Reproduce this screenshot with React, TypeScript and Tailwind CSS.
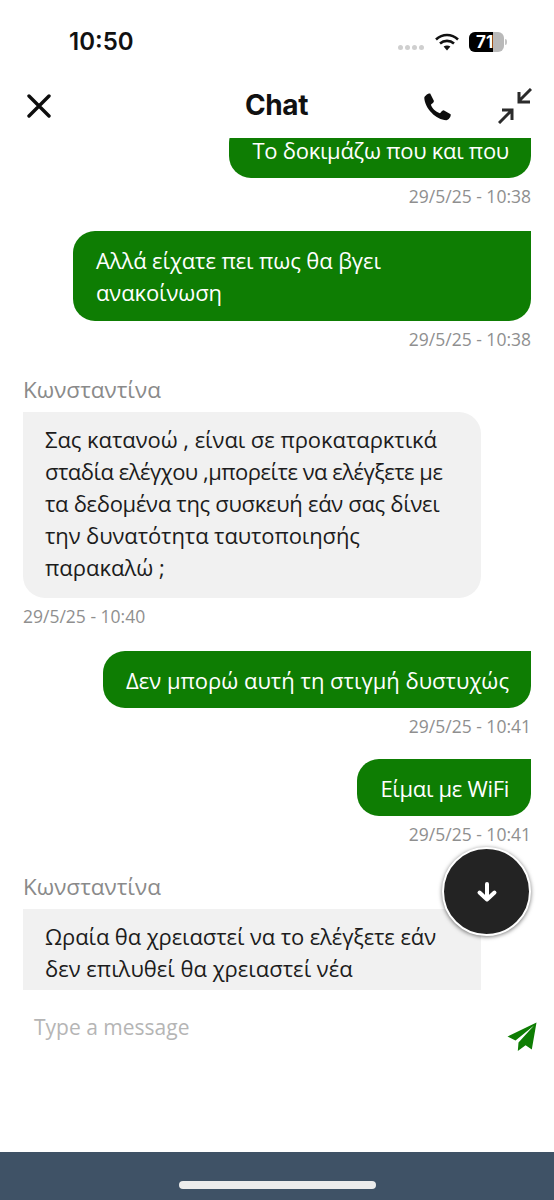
function Out({ text, time, cls = "" }: { text: React.ReactNode; time: string; cls?: string }) {
  return (
    <div className={`flex flex-col items-end ${cls}`}>
      <div className="bg-[#0e7d03] text-white rounded-bl-[22px] rounded-tl-[22px] rounded-br-[22px] pl-[23px] pr-[22px] pt-[13px] pb-[12px] text-[22px] leading-[32.2px]">{text}</div>
      <div className="mt-[6px] h-6 text-[17.5px] leading-6 text-[#8f8f8f]">{time}</div>
    </div>
  );
}
function In({ text, time, cls = "" }: { text: React.ReactNode; time?: string; cls?: string }) {
  return (
    <div className={`flex flex-col items-start ${cls}`}>
      <div className="h-7 text-[22.5px] leading-7 text-[#8a8a8a] mb-[8px]">Κωνσταντίνα</div>
      <div className="w-[458px] bg-[#f1f1f1] text-[#1c1c1c] rounded-tr-[22px] rounded-br-[22px] rounded-bl-[22px] pl-[22px] pr-[10px] pt-[11px] pb-[14px] text-[22px] leading-[32.2px] whitespace-nowrap">{text}</div>
      {time && <div className="mt-[6px] h-6 text-[17.5px] leading-6 text-[#8f8f8f]">{time}</div>}
    </div>
  );
}
export default function App() {
  return (
    <div className="relative w-[554px] h-[1200px] bg-white flex flex-col overflow-hidden font-['Open_Sans','Noto_Sans',sans-serif]">
      <div className="h-[75px] shrink-0 flex items-center justify-between pl-[69px] pr-[47px] pt-[8px]">
        <span className="text-[24px] font-semibold text-[#111] font-['Inter',sans-serif]">10:50</span>
        <div className="flex items-center">
          <div className="flex gap-[2px] mr-[11px] mt-[12px]">
            <i className="w-[5px] h-[5px] rounded-full bg-[#cfcfcf]" /><i className="w-[5px] h-[5px] rounded-full bg-[#cfcfcf]" /><i className="w-[5px] h-[5px] rounded-full bg-[#cfcfcf]" /><i className="w-[5px] h-[5px] rounded-full bg-[#cfcfcf]" />
          </div>
          <svg width="24" height="18" viewBox="0 0 24 18" className="mr-[10px]">
            <path d="M1 6.5C7.5 .5 16.5 .5 23 6.5" fill="none" stroke="#111" strokeWidth="2.6" />
            <path d="M5 10.5C9 7 15 7 19 10.5" fill="none" stroke="#111" strokeWidth="2.6" />
            <path d="M8.6 13.6C10.6 12 13.4 12 15.4 13.6L12 17.5Z" fill="#111" />
          </svg>
          <div className="relative w-[35px] h-[20px] rounded-[6px] bg-[#b9b9b9] overflow-hidden">
            <div className="absolute left-0 top-0 bottom-0 w-[24px] bg-black" />
            <span className="absolute left-[7px] top-0 text-[17px] leading-[20px] font-bold text-white font-['Inter',sans-serif]">71</span>
          </div>
          <div className="w-[2px] h-[6px] ml-[1px] bg-[#c4c4c4] rounded-r-sm" />
        </div>
      </div>

      <div className="relative h-[63px] shrink-0 flex items-center justify-between pl-[27px] pr-[22px]">
        <svg width="24" height="24" viewBox="0 0 24 24" className="mb-[1px]"><path d="M2 2L22 22M22 2L2 22" stroke="#0d0d0d" strokeWidth="3.4" strokeLinecap="round" /></svg>
        <div className="absolute left-[245px] top-[12px] text-[28px] leading-9 font-bold tracking-[-0.4px] text-[#111] font-['Inter',sans-serif]">Chat</div>
        <div className="flex items-center gap-[46px]">
          <svg width="28" height="28" viewBox="2 1 25.5 26"><path d="M2 5.5C2.5 3.5 5.5 1 7.5 1.5L11 8.5C11 10.5 8.6 11 8.2 12C9 15 12.5 18.5 16.5 19.8C17.8 19.2 18 17.2 20 17L26.5 20.7C27 23 24.5 26 22.5 26.3C13 26 2.5 15.5 2 5.5Z" fill="#0d0d0d" /></svg>
          <svg width="34" height="36" viewBox="0 0 34 36" className="mb-[1px]">
            <path d="M33 1L21 13M21 4V14H32" fill="none" stroke="#2b2b2b" strokeWidth="3" />
            <path d="M1 35L13 23M4 22H14V32" fill="none" stroke="#2b2b2b" strokeWidth="3" />
          </svg>
        </div>
      </div>

      <div className="h-[852px] shrink-0 overflow-hidden px-[23px]">
        <Out cls="mt-[-17px] mb-[23px]" text={<span className="tracking-[-0.27px]">Το δοκιμάζω που και που</span>} time="29/5/25 - 10:38" />
        <Out cls="mb-[25px]" text={<div className="w-[413px] tracking-[-0.1px]">Αλλά είχατε πει πως θα βγει ανακοίνωση</div>} time="29/5/25 - 10:38" />
        <In
          cls="mb-[23px]"
          text={<>
            <div className="tracking-[-0.05px]">Σας κατανοώ , είναι σε προκαταρκτικά</div>
            <div className="tracking-[-0.5px]">σταδία ελέγχου ,μπορείτε να ελέγξετε με</div>
            <div className="tracking-[-0.3px]">τα δεδομένα της συσκευή εάν σας δίνει</div>
            <div className="tracking-[-0.1px]">την δυνατότητα ταυτοποιησής</div>
            <div>παρακαλώ ;</div>
          </>}
          time="29/5/25 - 10:40"
        />
        <Out cls="mb-[21px]" text="Δεν μπορώ αυτή τη στιγμή δυστυχώς" time="29/5/25 - 10:41" />
        <Out cls="mb-[27px]" text={<span className="tracking-[-0.3px]">Είμαι με WiFi</span>} time="29/5/25 - 10:41" />
        <In
          text={<>
            <div className="tracking-[-0.1px]">Ωραία θα χρειαστεί να το ελέγξετε εάν</div>
            <div>δεν επιλυθεί θα χρειαστεί νέα</div>
            <div>&nbsp;</div>
          </>}
        />
      </div>

      <div className="relative flex-1 flex items-start justify-between pl-[34px] pr-[17px]">
        <span className="mt-[21px] text-[21px] leading-[32px] text-[#b5b5b5]">Type a message</span>
        <svg width="30" height="30" viewBox="0 0 30 30" className="mt-[32px]"><path d="M29.5 .5L24.8 27.5L18.6 23.2L10.8 29L11.5 20.5L27 3.5L8.5 18.5L.5 14.6Z" fill="#0e7d03" /></svg>
      </div>

      <div className="h-[48px] shrink-0 bg-[#3f5266] flex items-start justify-center pt-[29px]">
        <div className="w-[197px] h-[8px] rounded-full bg-[#ececec]" />
      </div>

      <div className="absolute left-[442px] top-[847px] w-[89px] h-[89px] rounded-full bg-[#232323] border-2 border-white shadow-[0_1px_4px_rgba(0,0,0,0.55)] flex items-center justify-center">
        <svg width="22" height="22" viewBox="0 0 22 22"><path d="M11 3V18M3.5 11.5L11 18.5L18.5 11.5" fill="none" stroke="#fff" strokeWidth="4" strokeLinecap="round" strokeLinejoin="round" /></svg>
      </div>
    </div>
  );
}
